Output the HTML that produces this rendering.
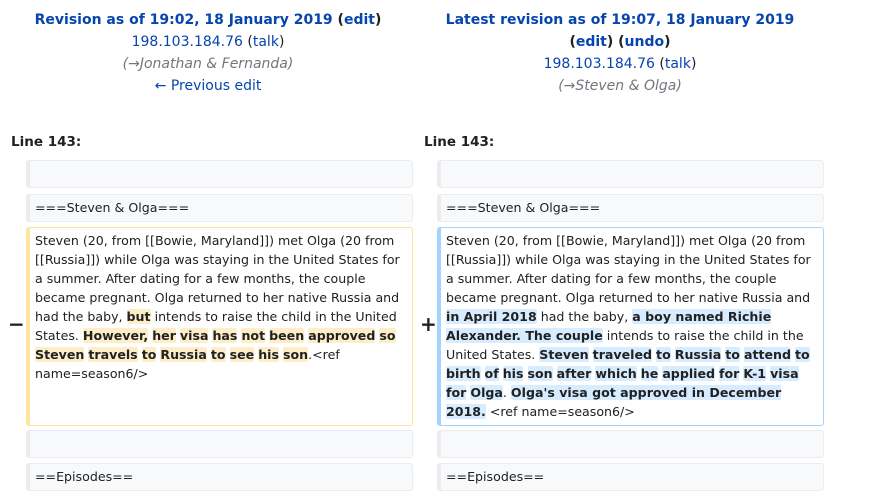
<!DOCTYPE html>
<html><head><meta charset="utf-8"><style>
body{margin:0;background:#fff;font-family:"DejaVu Sans",sans-serif;color:#202122;width:874px;height:496px;overflow:hidden;position:relative}
.hd{position:absolute;text-align:center;font-size:14px;line-height:22px;width:400px}
a{color:#0645ad;text-decoration:none}
.b{font-weight:bold}
.sum{color:#72777d;font-style:italic}
.ln{position:absolute;top:134px;font-weight:bold;font-size:13.5px}
.bx{position:absolute;box-sizing:border-box;border:1px solid #eaecf0;border-left-width:4px;background:#f8f9fa;border-radius:3px;font-size:12.6px;line-height:19px;padding:0 8px 0 5px}
.del{background:#fff;border-color:#ffe49c}
.ins{background:#fff;border-color:#a3d3ff}
.d{background:#feeec8;font-weight:bold;border-radius:2px}
.i{background:#d8ecff;font-weight:bold;border-radius:2px}
.sg{position:absolute;font-size:20px;font-weight:bold}
</style></head><body>
<div class="hd" style="left:8px;top:9px"><span class="b"><a>Revision as of 19:02, 18 January 2019</a> (<a>edit</a>)</span><br><a>198.103.184.76</a> (<a>talk</a>)<br><span class="sum">(→Jonathan &amp; Fernanda)</span><br><a>← Previous edit</a></div>
<div class="hd" style="left:420px;top:9px"><span class="b"><a>Latest revision as of 19:07, 18 January 2019</a><br>(<a>edit</a>) (<a>undo</a>)</span><br><a>198.103.184.76</a> (<a>talk</a>)<br><span class="sum">(→Steven &amp; Olga)</span></div>
<div class="ln" style="left:11px">Line 143:</div>
<div class="ln" style="left:424px">Line 143:</div>

<div class="bx" style="left:26px;top:160px;width:387px;height:28px"></div>
<div class="bx" style="left:26px;top:194px;width:387px;height:28px;padding-top:3px">===Steven &amp; Olga===</div>
<div class="bx del" style="left:26px;top:227px;width:387px;height:199px;padding-top:3px">Steven (20, from [[Bowie, Maryland]]) met Olga (20 from [[Russia]]) while Olga was staying in the United States for a summer. After dating for a few months, the couple became pregnant. Olga returned to her native Russia and had the baby, <span class="d">but</span> intends to raise the child in the United States. <span class="d">However,</span> <span class="d">her</span> <span class="d">visa</span> <span class="d">has</span> <span class="d">not</span> <span class="d">been</span> <span class="d">approved</span> <span class="d">so</span> <span class="d">Steven</span> <span class="d">travels</span> <span class="d">to</span> <span class="d">Russia</span> <span class="d">to</span> <span class="d">see</span> <span class="d">his</span> <span class="d">son</span>.&lt;ref name=season6/&gt;</div>
<div class="bx" style="left:26px;top:430px;width:387px;height:28px"></div>
<div class="bx" style="left:26px;top:463px;width:387px;height:28px;padding-top:3px">==Episodes==</div>

<div class="bx" style="left:437px;top:160px;width:387px;height:28px"></div>
<div class="bx" style="left:437px;top:194px;width:387px;height:28px;padding-top:3px">===Steven &amp; Olga===</div>
<div class="bx ins" style="left:437px;top:227px;width:387px;height:199px;padding-top:3px">Steven (20, from [[Bowie, Maryland]]) met Olga (20 from [[Russia]]) while Olga was staying in the United States for a summer. After dating for a few months, the couple became pregnant. Olga returned to her native Russia and <span class="i">in April 2018</span> had the baby, <span class="i">a boy named Richie Alexander. The couple</span> intends to raise the child in the United States. <span class="i">Steven</span> <span class="i">traveled</span> <span class="i">to</span> <span class="i">Russia</span> <span class="i">to</span> <span class="i">attend</span> <span class="i">to</span> <span class="i">birth</span> <span class="i">of</span> <span class="i">his</span> <span class="i">son</span> <span class="i">after</span> <span class="i">which</span> <span class="i">he</span> <span class="i">applied</span> <span class="i">for</span> <span class="i">K-1</span> <span class="i">visa</span> <span class="i">for</span> <span class="i">Olga</span>. <span class="i">Olga's visa got approved in December 2018.</span> &lt;ref name=season6/&gt;</div>
<div class="bx" style="left:437px;top:430px;width:387px;height:28px"></div>
<div class="bx" style="left:437px;top:463px;width:387px;height:28px;padding-top:3px">==Episodes==</div>

<div class="sg" style="left:8px;top:312px">−</div>
<div class="sg" style="left:420px;top:312px">+</div>
</body></html>
